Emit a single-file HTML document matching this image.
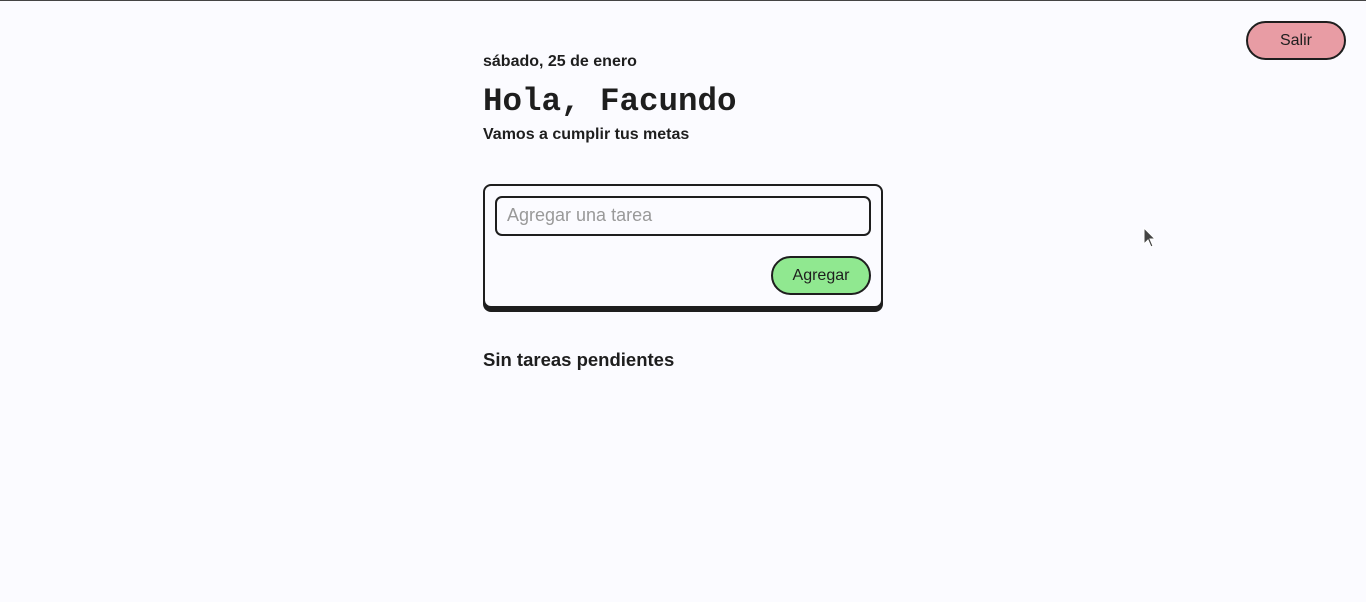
<!DOCTYPE html>
<html><head><meta charset="utf-8"><style>
html,body{margin:0;padding:0}
body{width:1366px;height:602px;background:#fbfbff;border-top:1px solid #444;box-sizing:border-box;position:relative;font-family:"Liberation Sans",sans-serif;color:#1e1e1e;overflow:hidden}
.abs{position:absolute}
.date{left:483px;top:52px;font-size:16px;font-weight:bold}
h1{position:absolute;margin:0;left:483px;top:82px;font-family:"Liberation Mono",monospace;font-size:32.5px;font-weight:bold;line-height:38px}
.sub{left:483px;top:125px;font-size:16px;font-weight:bold}
.card{left:483px;top:183px;width:400px;height:124px;box-sizing:border-box;border:2px solid #1e1e1e;border-radius:8px;box-shadow:0 4px 0 #1e1e1e;background:#fbfbff}
.inp{left:10px;top:10px;width:376px;height:40px;box-sizing:border-box;border:2px solid #1e1e1e;border-radius:7px;font-size:18px;color:#999;padding:7px 10px;line-height:20px}
.btn{box-sizing:border-box;border:2px solid #1e1e1e;border-radius:20px;font-size:16px;text-align:center;line-height:35px;height:39px}
.add{left:286px;top:70px;width:100px;background:#90e890}
.salir{left:1246px;top:20px;width:100px;background:#e89ca4}
.none{left:483px;top:348px;font-size:18.5px;font-weight:bold}
</style></head><body>
<div class="abs date">sábado, 25 de enero</div>
<h1>Hola, Facundo</h1>
<div class="abs sub">Vamos a cumplir tus metas</div>
<div class="abs card">
<div class="abs inp">Agregar una tarea</div>
<div class="abs btn add">Agregar</div>
</div>
<div class="abs btn salir">Salir</div>
<div class="abs none">Sin tareas pendientes</div>
<svg class="abs" style="left:1143px;top:226px" width="14" height="22" viewBox="0 0 14 22"><path d="M1 1 L1 17 L5 13 L8 20 L10 19 L7 12 L12 12 Z" fill="#444" stroke="#fff" stroke-width="1"/></svg>
</body></html>
